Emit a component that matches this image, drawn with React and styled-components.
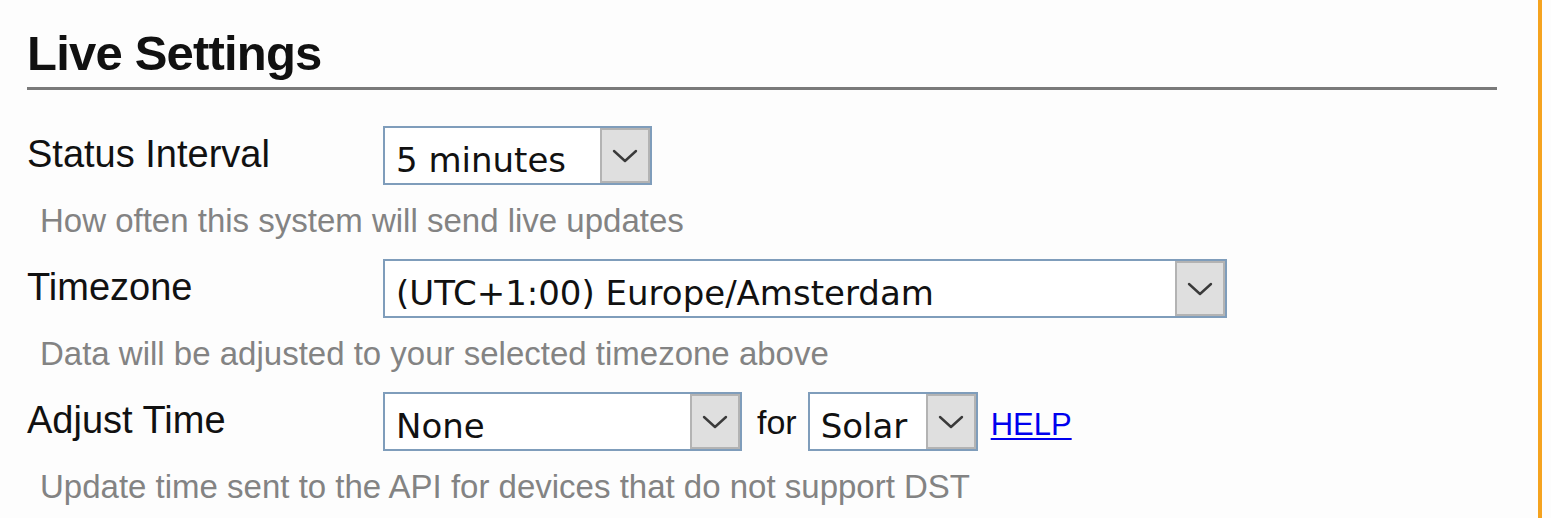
import React from "react";
import styled, { createGlobalStyle } from "styled-components";

const GlobalStyle = createGlobalStyle`
  html, body {
    margin: 0;
    padding: 0;
    background: #fdfdfd;
  }
  body {
    font-family: "Liberation Sans", Arial, sans-serif;
    color: #111;
  }
`;

const Page = styled.div`
  display: flex;
  min-height: 518px;
`;

const Panel = styled.div`
  box-sizing: border-box;
  width: 1542px;
  min-height: 518px;
  padding: 25px 41px 0 27px;
  border-right: 4px solid #f5a31f;
`;

const Heading = styled.h2`
  margin: 0;
  padding-bottom: 6px;
  font-family: "Liberation Sans", Arial, sans-serif;
  font-weight: bold;
  font-size: 49px;
  line-height: 56px;
  letter-spacing: -0.8px;
  color: #111;
  border-bottom: 3px solid #7a7a7a;
`;

const Form = styled.div`
  margin-top: 36px;
`;

const FieldRow = styled.div`
  display: flex;
  align-items: flex-start;
  height: 59px;
`;

const Label = styled.div`
  width: 356px;
  flex: none;
  padding-top: 6px;
  font-size: 38px;
  line-height: 44px;
  color: #111;
`;

const Help = styled.div`
  margin: 17px 0 19px 13px;
  font-size: 33px;
  line-height: 38px;
  color: #838383;
  white-space: nowrap;
`;

const Controls = styled.div`
  display: flex;
  align-items: center;
  height: 59px;
`;

const Select = styled.div`
  box-sizing: border-box;
  display: flex;
  width: ${(p) => p.$width}px;
  height: 59px;
  flex: none;
  border: 2px solid #7f9dbb;
  background: #fff;
`;

const Value = styled.div`
  flex: 1;
  min-width: 0;
  padding: 9px 0 0 11px;
  font-family: "DejaVu Sans", Verdana, sans-serif;
  font-size: 34px;
  line-height: 46px;
  color: #111;
  white-space: nowrap;
  overflow: hidden;
`;

const Arrow = styled.div`
  box-sizing: border-box;
  width: 50px;
  height: 55px;
  flex: none;
  display: flex;
  align-items: center;
  justify-content: center;
  background: #dfdfdf;
  border: 2px solid #b3b3b3;
`;

const Word = styled.span`
  margin: 0 11px 0 15px;
  font-size: 34px;
  line-height: 40px;
  color: #111;
`;

const HelpLink = styled.a`
  margin: 6px 0 0 13px;
  font-size: 31px;
  line-height: 36px;
  color: #0000ee;
  text-decoration: underline;
  text-decoration-thickness: 2px;
  text-underline-offset: 3px;
  cursor: pointer;
`;

const Chevron = () => (
  <svg width="26" height="14" viewBox="0 0 26 14" aria-hidden="true">
    <polyline
      points="2,2 13,12 24,2"
      fill="none"
      stroke="#3a3a3a"
      strokeWidth="2.4"
      strokeLinecap="round"
      strokeLinejoin="round"
    />
  </svg>
);

const Dropdown = ({ width, value }) => (
  <Select $width={width}>
    <Value>{value}</Value>
    <Arrow>
      <Chevron />
    </Arrow>
  </Select>
);

export default function App() {
  return (
    <>
      <GlobalStyle />
      <Page>
        <Panel>
          <Heading>Live Settings</Heading>
          <Form>
            <FieldRow>
              <Label>Status Interval</Label>
              <Dropdown width={269} value="5 minutes" />
            </FieldRow>
            <Help>How often this system will send live updates</Help>

            <FieldRow>
              <Label>Timezone</Label>
              <Dropdown width={844} value="(UTC+1:00) Europe/Amsterdam" />
            </FieldRow>
            <Help>Data will be adjusted to your selected timezone above</Help>

            <FieldRow>
              <Label>Adjust Time</Label>
              <Controls>
                <Dropdown width={359} value="None" />
                <Word>for</Word>
                <Dropdown width={170} value="Solar" />
                <HelpLink>HELP</HelpLink>
              </Controls>
            </FieldRow>
            <Help>Update time sent to the API for devices that do not support DST</Help>
          </Form>
        </Panel>
      </Page>
    </>
  );
}
